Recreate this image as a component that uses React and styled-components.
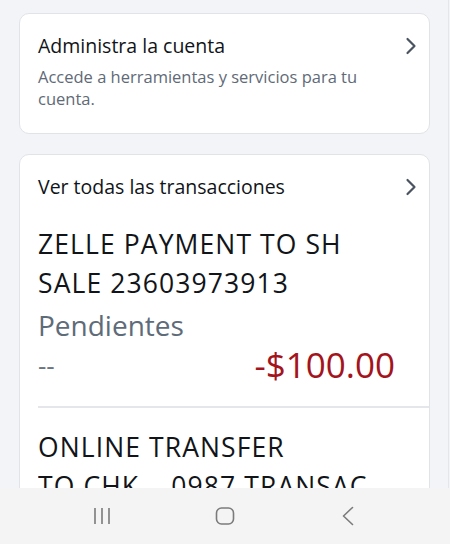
import React from "react";
import styled, { createGlobalStyle } from "styled-components";

const GlobalStyle = createGlobalStyle`
  html, body {
    margin: 0;
    padding: 0;
    background: #f3f4f8;
    font-family: "Open Sans", "Noto Sans", sans-serif;
    -webkit-font-smoothing: antialiased;
  }
  * {
    box-sizing: border-box;
  }
`;

const transactions = [
  {
    id: 1,
    lines: ["ZELLE PAYMENT TO SH", "SALE 23603973913"],
    status: "Pendientes",
    date: "--",
    amount: "-$100.00",
  },
  {
    id: 2,
    lines: ["ONLINE TRANSFER", "TO CHK ...0987 TRANSAC"],
    status: "Pendientes",
    date: "--",
    amount: "-$50.00",
  },
];

function Chevron() {
  return (
    <svg width="12" height="18" viewBox="0 0 12 18" fill="none">
      <path
        d="M2.5 2L9.5 9L2.5 16"
        stroke="#4a5360"
        strokeWidth="2.2"
        strokeLinecap="round"
        strokeLinejoin="round"
      />
    </svg>
  );
}

function App() {
  return (
    <>
      <GlobalStyle />
      <Screen>
        <Content>
          <Card>
            <CardHeader>
              <HeaderTitle>Administra la cuenta</HeaderTitle>
              <Chevron />
            </CardHeader>
            <HeaderText>Accede a herramientas y servicios para tu cuenta.</HeaderText>
          </Card>

          <Card>
            <CardHeader>
              <HeaderTitle>Ver todas las transacciones</HeaderTitle>
              <Chevron />
            </CardHeader>
            <List>
              {transactions.map((tx) => (
                <Item key={tx.id}>
                  {tx.lines.map((line) => (
                    <TxLine key={line}>{line}</TxLine>
                  ))}
                  <TxStatus>{tx.status}</TxStatus>
                  <TxRow>
                    <TxDate>{tx.date}</TxDate>
                    <TxAmount>{tx.amount}</TxAmount>
                  </TxRow>
                </Item>
              ))}
            </List>
          </Card>
        </Content>

        <NavBar>
          <NavButton aria-label="Recientes">
            <svg width="18" height="18" viewBox="0 0 18 18" fill="none">
              <path d="M2 1v16M9 1v16M16 1v16" stroke="#7b7b7b" strokeWidth="1.6" />
            </svg>
          </NavButton>
          <NavButton aria-label="Inicio">
            <svg width="20" height="18" viewBox="0 0 20 18" fill="none">
              <rect x="1.5" y="1" width="17" height="16" rx="5" stroke="#7b7b7b" strokeWidth="1.6" />
            </svg>
          </NavButton>
          <NavButton aria-label="Atrás">
            <svg width="14" height="20" viewBox="0 0 14 20" fill="none">
              <path d="M11.5 1.5L2.5 10l9 8.5" stroke="#7b7b7b" strokeWidth="1.6" strokeLinecap="round" strokeLinejoin="round" />
            </svg>
          </NavButton>
        </NavBar>
      </Screen>
    </>
  );
}

const Screen = styled.div`
  width: 450px;
  height: 544px;
  display: flex;
  flex-direction: column;
  overflow: hidden;
  background: #f3f4f8;
`;

const Content = styled.main`
  flex: 1;
  min-height: 0;
  overflow: hidden;
  width: 449px;
  border-right: 1px solid #e4e6eb;
  padding: 13px 18px 0 19px;
  display: flex;
  flex-direction: column;
  gap: 20px;
`;

const Card = styled.section`
  flex-shrink: 0;
  background: #ffffff;
  border: 1px solid #e1e3e8;
  border-radius: 10px;
  padding: 20px 0 23px 18px;
`;

const CardHeader = styled.div`
  display: flex;
  align-items: center;
  justify-content: space-between;
  padding-right: 12px;
`;

const HeaderTitle = styled.h2`
  margin: 0;
  font-size: 19.5px;
  line-height: 24px;
  font-weight: 400;
  color: #111418;
`;

const HeaderText = styled.p`
  margin: 8px 50px 0 0;
  font-size: 16.5px;
  line-height: 22px;
  color: #5f6a77;
`;

const List = styled.ul`
  list-style: none;
  margin: 26px 0 0;
  padding: 0;
`;

const Item = styled.li`
  padding: 0 0 19px;
  border-bottom: 2px solid #e4e6e9;

  & + & {
    padding-top: 20px;
  }
`;

const TxLine = styled.div`
  font-size: 26.5px;
  line-height: 39px;
  letter-spacing: 1.1px;
  color: #111418;
  white-space: nowrap;
  overflow: hidden;
`;

const TxStatus = styled.div`
  margin-top: 6px;
  font-size: 28px;
  line-height: 32px;
  color: #5e6b78;
`;

const TxRow = styled.div`
  margin-top: 2px;
  display: flex;
  align-items: center;
  justify-content: space-between;
  padding-right: 34px;
`;

const TxDate = styled.span`
  font-size: 26px;
  line-height: 44px;
  color: #6b7580;
`;

const TxAmount = styled.span`
  font-size: 35px;
  line-height: 44px;
  color: #a3141d;
`;

const NavBar = styled.nav`
  flex-shrink: 0;
  height: 56px;
  background: #f4f4f4;
  display: flex;
  align-items: center;
  justify-content: space-around;
  padding: 0 40px;
`;

const NavButton = styled.button`
  border: none;
  background: none;
  padding: 0;
  width: 40px;
  height: 40px;
  display: flex;
  align-items: center;
  justify-content: center;
`;

export default App;
